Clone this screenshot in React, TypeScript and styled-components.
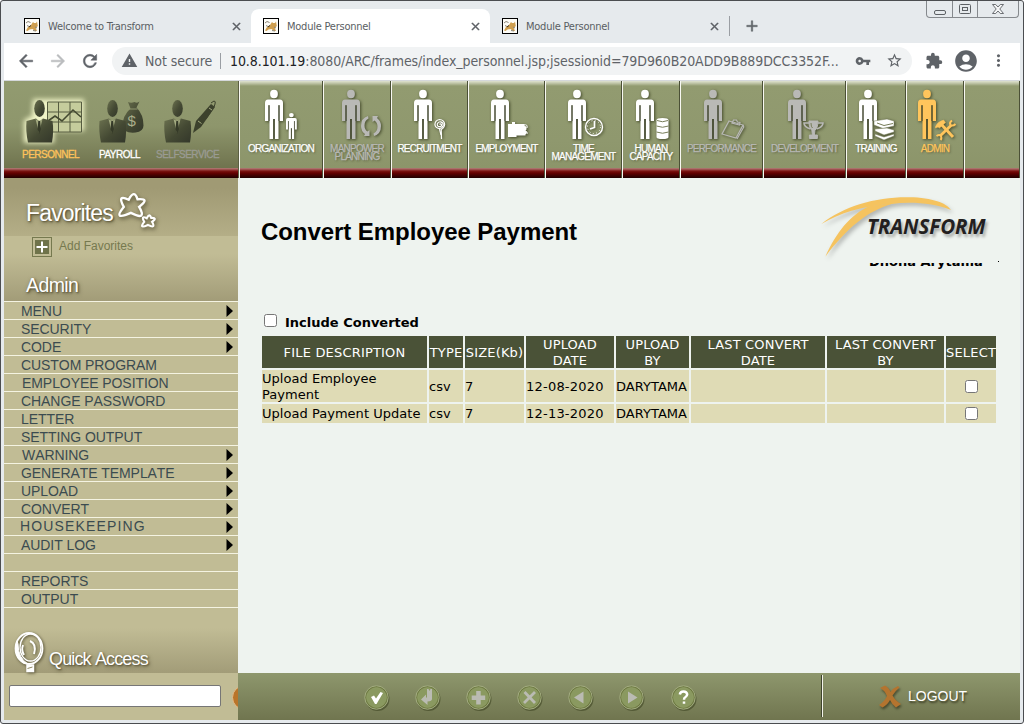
import React from "react";
import styled, { createGlobalStyle, css } from "styled-components";
import {
  MdArrowBack,
  MdArrowForward,
  MdRefresh,
  MdWarning,
  MdVpnKey,
  MdStarBorder,
  MdExtension,
  MdAccountCircle,
  MdMoreVert,
  MdClose,
  MdAdd,
} from "react-icons/md";

const ui = '"DejaVu Sans Condensed", "DejaVu Sans", sans-serif';
const sans = '"Liberation Sans", Arial, sans-serif';
const verdana = 'Verdana, "DejaVu Sans", sans-serif';

const GlobalStyle = createGlobalStyle`
  * { box-sizing: border-box; }
  body { margin: 0; overflow: hidden; font-kerning: none; }
`;

const Frame = styled.div`
  width: 1024px;
  height: 724px;
  display: flex;
  flex-direction: column;
  background: #e6eaed;
  border: 1px solid #4b4d50;
  border-radius: 3px;
`;

/* ---------- browser chrome ---------- */

const TabStrip = styled.div`
  height: 42px;
  display: flex;
  align-items: flex-end;
  padding-left: 11px;
  flex: none;
`;

const Tab = styled.div<{ $active?: boolean }>`
  width: 239px;
  height: 34px;
  display: flex;
  align-items: center;
  padding: 0 8px 0 12px;
  gap: 8px;
  font: 11px/16px ${ui};
  font-stretch: condensed;
  letter-spacing: -0.24px;
  color: #5a5e63;
  border-radius: 8px 8px 0 0;
  background: ${(p) => (p.$active ? "#fff" : "transparent")};
  svg:last-child path:last-child {
    stroke: currentColor;
    stroke-width: 0.9px;
  }
`;

const TabTitle = styled.span`
  flex: 1;
  padding-top: 1px;
`;

const StripSide = styled.div`
  height: 34px;
  display: flex;
  align-items: center;
  gap: 13px;
  flex: 1;
  color: #5f6368;
  path:last-child {
    stroke: currentColor;
    stroke-width: 0.6px;
  }
`;

const Rule = styled.i<{ $h: number }>`
  width: 1px;
  height: ${(p) => p.$h}px;
  background: #9a9ea3;
`;

const WindowButtons = styled.div`
  width: 93px;
  height: 17px;
  display: flex;
  align-self: flex-start;
  margin-right: 4px;
  border: 1px solid #85898d;
  border-top: 0;
  border-radius: 0 0 4px 4px;
`;

const WindowButton = styled.span<{ $w: number }>`
  width: ${(p) => p.$w}px;
  display: flex;
  align-items: center;
  justify-content: center;
  & + & {
    border-left: 1px solid #85898d;
  }
`;

const Toolbar = styled.div`
  height: 38px;
  margin: 0 3px;
  padding: 4px 10px 6px 12px;
  display: flex;
  align-items: center;
  background: #fff;
  border-bottom: 1px solid #d5d8db;
  color: #5f6368;
  flex: none;
`;

const NavButtons = styled.div`
  display: flex;
  width: 96px;
  gap: 12px;
  align-items: center;
  path:last-child {
    stroke: currentColor;
    stroke-width: 0.6px;
  }
`;

const Omnibox = styled.div`
  width: 800px;
  height: 28px;
  border-radius: 14px;
  background: #f1f3f4;
  display: flex;
  align-items: center;
  padding-left: 9px;
  font: 14px/20px ${ui};
  font-stretch: condensed;
  letter-spacing: -0.08px;
  white-space: nowrap;
`;

const Security = styled.span`
  width: 75px;
  margin-left: 7px;
`;

const Address = styled.span`
  width: 625px;
  margin-left: 9px;
  b {
    font-weight: normal;
    color: #202124;
  }
`;

const BoxIcons = styled.span`
  display: flex;
  gap: 15px;
  align-items: center;
`;

const ToolIcons = styled.div`
  display: flex;
  align-items: center;
  margin-left: 13px;
  gap: 10px;
`;

/* ---------- application header ---------- */

const redBar = "linear-gradient(#b08078 0, #984040 2px, #7c1512 3px, #650000 5px, #480000 7px, #200000 10px)";

const Header = styled.header`
  height: 97px;
  margin: 0 3px;
  display: flex;
  flex: none;
`;

const RoleBar = styled.div`
  width: 235px;
  display: flex;
  padding: 14px 0 0 16px;
  border-right: 1px solid #5b5f43;
  background: ${redBar} 0 100% / 100% 10px no-repeat, linear-gradient(#929b70 0, #8e966c 45px, #6f734e 87px);
`;

const Role = styled.div<{ $w: number; $color: string; $indent?: number }>`
  width: ${(p) => p.$w}px;
  display: flex;
  flex-direction: column;
  font: 10px/12px ${sans};
  letter-spacing: -0.5px;
  color: ${(p) => p.$color};
  -webkit-text-stroke: 0.3px currentColor;
  span {
    padding-left: ${(p) => p.$indent ?? 2}px;
  }
`;

const ModuleCell = styled.div<{ $w: number; $tone: string }>`
  width: ${(p) => p.$w}px;
  display: flex;
  flex-direction: column;
  padding-top: 6px;
  border-left: 1px solid #f8f8f2;
  border-right: 1px solid #4b5036;
  color: ${(p) => p.$tone};
  background: ${redBar} 0 100% / 100% 10px no-repeat,
    linear-gradient(#dfe2d0 0, #c3c8ac 2px, #929b70 5px, #8f986e 60px, #8c956a 87px);
`;

const ModuleIcon = styled.svg<{ $left: number }>`
  display: block;
  overflow: visible;
  margin-left: ${(p) => p.$left}px;
  filter: drop-shadow(1px 1px 1.5px rgba(40, 45, 20, 0.75));
`;

const ModuleLabel = styled.div`
  margin-top: 3px;
  text-align: center;
  font: 10px/8px ${sans};
  letter-spacing: -0.78px;
  white-space: pre;
  -webkit-text-stroke: 0.25px currentColor;
  text-shadow: 1px 1px 2px rgba(40, 45, 20, 0.5);
`;

/* ---------- sidebar ---------- */

const Workspace = styled.div`
  flex: 1;
  display: flex;
  margin: 0 3px 3px;
  min-height: 0;
`;

const Sidebar = styled.aside`
  width: 234px;
  background: #c1bc95;
  font-family: ${sans};
  display: flex;
  flex-direction: column;
`;

const glow = css`
  color: #fff;
  text-shadow: 1px 1px 2px rgba(60, 55, 30, 0.75), 1px 2px 4px rgba(60, 55, 30, 0.5);
`;

const FavoritesHead = styled.div`
  height: 58px;
  padding: 14px 0 0 22px;
  display: flex;
  background: linear-gradient(#a09a74, #a09a74 10px, #b4ae87);
  font-size: 23px;
  line-height: 42px;
  letter-spacing: -0.85px;
  ${glow}
  svg {
    margin-left: 4px;
    overflow: visible;
    filter: drop-shadow(1px 2px 2px rgba(60, 55, 30, 0.8));
  }
`;

const FavoritesBody = styled.div`
  height: 65px;
  background: linear-gradient(#c1bc95 0, #c1bc95 18px, #a29c78 65px);
`;

const AddFavorites = styled.div`
  display: flex;
  align-items: center;
  padding: 1px 0 0 28px;
  gap: 7px;
  height: 21px;
  font-size: 12px;
  color: #76794f;
  span {
    margin-top: -3px;
  }
`;

const SectionTitle = styled.div`
  padding: 16px 0 0 22px;
  font-size: 19.5px;
  line-height: 24px;
  letter-spacing: -0.6px;
  ${glow}
`;

const MenuList = styled.ul`
  margin: 0;
  padding: 0;
  list-style: none;
  border-bottom: 1px solid #f4f3e2;
`;

const MenuItem = styled.li<{ $wide?: boolean; $indent?: number }>`
  height: 18px;
  border-top: 1px solid #f4f3e2;
  display: flex;
  align-items: center;
  justify-content: space-between;
  padding: 1px 5px 0 ${(p) => p.$indent ?? 17}px;
  font-size: 14px;
  line-height: ${(p) => (p.$wide ? "15px" : "17px")};
  letter-spacing: ${(p) => (p.$wide ? "1.15px" : "-0.07px")};
  color: #3b4b50;
  span {
    padding-bottom: ${(p) => (p.$wide ? "2px" : "0")};
  }
`;

const QuickAccess = styled.div`
  margin-top: auto;
  height: 65px;
  display: flex;
  align-items: flex-end;
  padding: 0 0 2px 9px;
  gap: 4px;
  background: linear-gradient(#c1bc95 20px, #a29c78);
  font-size: 18px;
  line-height: 24px;
  letter-spacing: -0.85px;
  ${glow}
  svg {
    margin-bottom: -2.5px;
    filter: drop-shadow(1px 1px 1.5px rgba(60, 55, 30, 0.8));
  }
`;

const SearchRow = styled.div`
  height: 47px;
  display: flex;
  align-items: center;
  justify-content: space-between;
  padding: 0 0 1px 5px;
  overflow: hidden;
`;

const SearchInput = styled.input`
  width: 212px;
  height: 22px;
  border: 1px solid #767676;
  border-radius: 2px;
  background: #fff;
  padding: 0 2px;
`;

const GoButton = styled.span`
  width: 6px;
  height: 25px;
  margin-top: 2px;
  display: flex;
  overflow: hidden;
  svg {
    flex: none;
  }
`;

/* ---------- main panel ---------- */

const MainColumn = styled.div`
  flex: 1;
  display: flex;
  flex-direction: column;
`;

const Main = styled.main`
  flex: 1;
  background: #eef3ef;
  padding-left: 22px;
  color: #000;
  font: 13px/16px ${verdana};
`;

const TitleRow = styled.div`
  display: flex;
  justify-content: space-between;
  height: 130px;
`;

const Title = styled.h1`
  margin: 39px 0 0 1px;
  font: bold 24px/30px ${sans};
  letter-spacing: -0.06px;
`;

const Brand = styled.div`
  width: 204px;
  display: flex;
  flex-direction: column;
`;

const BrandMark = styled.div`
  height: 83px;
  display: grid;
  > * {
    grid-area: 1 / 1;
  }
  svg {
    margin-left: 2px;
    filter: drop-shadow(2px 3px 2px rgba(0, 0, 0, 0.25));
  }
`;

const BrandName = styled.span`
  margin: 34px 0 0 51px;
  font: italic bold 20.5px/28px "Open Sans", sans-serif;
  letter-spacing: -0.05px;
  color: #231f20;
  text-shadow: 2px 3px 3px rgba(0, 0, 0, 0.3);
`;

const Speck = styled.i`
  width: 1px;
  height: 1px;
  margin: 0 0 1px 182px;
  background: #000;
`;

const UserName = styled.div`
  height: 7px;
  padding-left: 53px;
  display: flex;
  align-items: flex-end;
  overflow: hidden;
  font-weight: bold;
  white-space: nowrap;
`;

const Check = styled.input.attrs({ type: "checkbox" })`
  width: 13px;
  height: 13px;
  margin: 0;
`;

const IncludeRow = styled.label`
  display: flex;
  align-items: flex-start;
  gap: 8px;
  height: 26px;
  padding: 6px 0 0 4px;
  font-weight: bold;
  span {
    padding-top: 1px;
  }
`;

const Table = styled.table`
  table-layout: fixed;
  width: 738px;
  border-collapse: separate;
  border-spacing: 2px;
`;

/* Sits slightly low in its line without making the cell taller. */
const CellText = styled.div`
  margin: 0.6px 0 -0.6px;
`;

const Th = styled.th`
  height: 32px;
  padding: 0;
  background: #4a5237;
  color: #fff;
  font-weight: normal;
  letter-spacing: 0.18px;
`;

const Td = styled.td<{ $center?: boolean; $spread?: boolean }>`
  height: 19px;
  padding: 0;
  background: #dfdbb5;
  letter-spacing: ${(p) => (p.$spread ? "0.22px" : "0.03px")};
  text-align: ${(p) => (p.$center ? "center" : "left")};
  ${Check} {
    display: block;
    margin: 0 auto;
  }
`;

/* ---------- footer ---------- */

const Footer = styled.footer`
  height: 47px;
  display: flex;
  align-items: center;
  padding-bottom: 1px;
  background: linear-gradient(#8e976d, #70754f);
`;

const Actions = styled.div`
  width: 583px;
  display: flex;
  gap: 26.1px;
  padding: 3px 0 0 126px;
  svg {
    flex: none;
    display: block;
    overflow: visible;
  }
`;

const Divider = styled.i`
  width: 2px;
  height: 42px;
  border-left: 1px solid #3f442c;
  background: #f4f4ec;
`;

const Logout = styled.div`
  display: flex;
  align-items: center;
  gap: 6px;
  margin-left: 55px;
  color: #fff;
  font: 14px/20px ${sans};
  text-shadow: 1px 2px 2px rgba(40, 40, 20, 0.8);
  svg {
    filter: drop-shadow(1px 2px 1px rgba(40, 40, 20, 0.6));
  }
`;

/* ---------- drawings ---------- */

const Favicon = () => (
  <svg width="16" height="16" viewBox="0 0 16 16">
    <rect x=".5" y=".5" width="15" height="15" fill="#fdfcf7" stroke="#000" />
    <path d="M2 12.500l2-3.500 3-2 2-3 1 1h2l1-1.500.8 4.500-2 2 1.200 3h-2l-2.500-2-3 .5-2 1.500z" fill="#cf9f50" />
    <path d="M2 5l2-1.500 2.500 1M3 7.500l2 1M9 12.500l3 .5M11 9l2 1" stroke="#8b8578" fill="none" />
    <path d="M5 9l2-1.500" stroke="#3a2d18" />
  </svg>
);

const Person = () => (
  <g>
    <ellipse cx="9" cy="4" rx="3.900" ry="4.200" fill="currentColor" />
    <path d="M3 9.500h12q3 0 3 3.500v18h-3.500V15h-1v34H9.800V29H8.200v20H4.500V15h-1v16H0V13q0-3.500 3-3.500z" fill="currentColor" />
    <path d="M4 15.500V31M14 15.500V31M9 29v20" stroke="#2e3220" strokeWidth=".8" />
  </g>
);

const extras: Record<string, React.ReactNode> = {
  child: (
    <g transform="translate(21 23) scale(.6 .53)">
      <Person />
    </g>
  ),
  cycle: (
    <g fill="currentColor">
      <path d="M26 26q-7 2-7 10 0 5 4 8l-1 2h5.500v-6l-2 1.500q-3-2-3-6 0-5 4-7z" />
      <path d="M32 46q7-2 7-10 0-5-4-8l1-2h-5.500v6l2-1.500q3 2 3 6 0 5-4 7z" />
    </g>
  ),
  spiral: (
    <g fill="none" stroke="currentColor" strokeWidth="1.200">
      <path d="M25.500 34.500q1.200-1.400 2 0 .3 2-2 2.200-2.600-.4-2.200-2.700.8-2.500 3.300-2.200 3 .8 2.600 3.600-.9 3-4 3.200-4-.8-4.300-4.100.2-4.200 4.600-5 4.600.2 5.200 4.800-.4 4-3.500 5.200l.3 9.500" />
      <path d="M25.500 39l1.500 6" />
    </g>
  ),
  case: (
    <g fill="currentColor">
      <path d="M17 34h4v-2h3v2h9.500v2l2 .5v3l-1 1 1.500 2-1.500 2v1h-9v1.500H17z" />
      <path d="M33 35q4-1 3 3M33 41q4 0 3 3" fill="none" stroke="currentColor" />
    </g>
  ),
  clock: (
    <g fill="none" stroke="currentColor">
      <circle cx="26" cy="37" r="8.500" strokeWidth="1.400" />
      <circle cx="26" cy="37" r="6.500" strokeDasharray="1 2.400" />
      <path d="M26.500 31v6.500L22 39" strokeWidth="1.700" />
    </g>
  ),
  barrel: (
    <g>
      <path d="M20.500 30v17q0 2 6 2t6-2V30q0-2-6-2t-6 2z" fill="currentColor" />
      <path d="M21 30.500q5.500 2.500 11 0M20.500 36q6 2.500 12 0M20.500 42q6 2.500 12 0" fill="none" stroke="#777d59" />
    </g>
  ),
  clipboard: (
    <g fill="none" stroke="currentColor" strokeWidth="1.200">
      <path d="M25 31l14 4-7 13-14-4z" />
      <path d="M39 35l.8 2L33 49M28 33l1.500-3h3l1 2 2.500.5-.5 2.500z" />
    </g>
  ),
  trophy: (
    <g fill="none" stroke="currentColor">
      <path d="M21 31h9q0 7-3 9l-.6 5h3v3.500h-8V45h3l-.6-5q-3-2-2.800-9z" fill="currentColor" />
      <path d="M21 33h-5q0 4 6.500 6M30 33h5q0 4-6.500 6" strokeWidth="1.600" />
      <path d="M23 33q0 4 1.500 5" stroke="#777d59" />
    </g>
  ),
  books: (
    <g stroke="#777d59" strokeWidth=".5" fill="currentColor">
      <path d="M15 31l13-2 7 2v5l-11 2.500L15 35z" />
      <path d="M16 39l12-1 7 2v2l-10 3-9-4z" />
      <path d="M16 44l9 3 10-3v2l-10 4-9-4z" />
      <path d="M18 33l7 2.500 9-2" fill="none" strokeWidth="1" />
    </g>
  ),
  tools: (
    <g fill="none" stroke="currentColor">
      <path d="M23 34l12 13" strokeWidth="3" />
      <path d="M17.500 36.500q2-5 8-6.500l2 2.500-6 5.500-1.500-1-2.500 1z" fill="currentColor" strokeWidth=".5" />
      <path d="M33.500 35L22 46" strokeWidth="2.800" />
      <path d="M34 30.500q-3 2-1.500 4.500 2.500 1.500 5-1M18.500 46q3-2 4.500 0 1 2.500-.5 4" strokeWidth="2" />
    </g>
  ),
};

const Businessman = () => (
  <g fill="url(#suit)">
    <ellipse cx="19.500" cy="13.500" rx="5.300" ry="8.500" />
    <path d="M6.500 26l9.500-2.500 3.500 3 3.500-3 9.500 2.500q1.500 10-.5 21.500H8Q5.500 36 6.500 26z" />
    <path d="M15.500 24l3.500 14 3.500-14-1.500 1.500h-3z" fill="#a3aa80" />
    <path d="M18.300 26h1.800l.8 8-1.700 5-1.700-5z" fill="#353a28" />
  </g>
);

const SuitGradient = () => (
  <defs>
    <linearGradient id="suit" x1="0" y1="0" x2="1" y2="1">
      <stop offset="0" stopColor="#6b714f" />
      <stop offset=".55" stopColor="#444933" />
      <stop offset="1" stopColor="#33372a" />
    </linearGradient>
    <filter id="halo" x="-30%" y="-30%" width="160%" height="160%">
      <feGaussianBlur stdDeviation="2.800" />
    </filter>
  </defs>
);

const HaloSvg = styled.svg`
  overflow: visible;
`;

const PersonnelIcon = () => (
  <HaloSvg width="66" height="54" viewBox="0 0 66 54">
    <SuitGradient />
    <path d="M13 4h51v32H34v12H4V25l8-4z" fill="#f0f4c6" filter="url(#halo)" />
    <rect x="28" y="7" width="33" height="30" fill="#c5cc9c" />
    <path d="M27.500 7h34v30h-34zM38.500 7v30M50 7v30M27.500 17h34M27.500 27h34" fill="none" stroke="#565c40" />
    <path d="M28 26l7-5 7 5 11-11 8 7" fill="none" stroke="#444a31" strokeWidth="1.600" />
    <Businessman />
  </HaloSvg>
);

const PayrollIcon = () => (
  <svg width="50" height="54" viewBox="0 0 50 54">
    <g transform="translate(-3 0)">
      <path d="M35 7q3 1.500 6.500 0 3 1.500 5-.5l-3 6q7 7 7 18 0 6-8 7-12 1-13-6 0-11 8-18z" fill="url(#suit)" />
      <path d="M35.500 14h9" stroke="#8f966e" />
      <text x="34.500" y="31" fontFamily="Liberation Sans" fontSize="15" fill="#a9ae8b">
        $
      </text>
      <Businessman />
    </g>
  </svg>
);

const SelfServiceIcon = () => (
  <svg width="66" height="54" viewBox="0 0 66 54">
    <g transform="translate(3 0)">
      <path d="M35 38l3-12L53 9l4 3-14 20z" fill="#3c412c" />
      <path d="M53 8l3-2q2 0 1 3l-1 3M54 15l-6 9" stroke="#3c412c" fill="none" />
      <path d="M40 26l3.500 2.500M51 13l3 2" stroke="#a3aa80" />
      <Businessman />
    </g>
  </svg>
);

const starPath = "M12 7.500Q17-2.500 20 7Q32 6 21.500 14Q29 27 14 19.500Q-3 27 7.500 14Q1 2 12 7.500z";

const Stars = () => (
  <svg width="42" height="40" viewBox="0 0 42 40" fill="none" stroke="#fff">
    <path d={starPath} strokeWidth="2.200" transform="translate(-1.500 -.5) scale(1.100)" />
    <path d={starPath} strokeWidth="3.800" transform="translate(23 22) scale(.56)" />
  </svg>
);

const Magnifier = () => (
  <svg width="32" height="42" viewBox="0 0 32 42" fill="none" stroke="#fff">
    <ellipse cx="16" cy="16.500" rx="13.500" ry="15.500" strokeWidth="1.800" />
    <ellipse cx="17.500" cy="15.500" rx="10.500" ry="13.500" strokeWidth="1.300" />
    <path d="M4 9q-4 9 2 18 4 5 9 5-10-6-10-20z" fill="#fff" />
    <path d="M17 9q7 3 4 13M10 13q-2 5 1 10" strokeWidth="2" />
    <path d="M14 33h6M14 33v6.500h6.500V33z" strokeWidth="1.500" fill="#fff" />
    <path d="M14.500 36.500l5-1.500" stroke="#8f8963" />
  </svg>
);

const glyphs = [
  <path key="ok" d="M7 12l3-1.500 2 3L16.500 7l2.500 1-6.500 11h-1.500z" fill="#fff" />,
  <path key="enter" d="M12 4h1.500l1 2 1-2H17v10q0 2-4.500 2.500V20L6 14.500l5-5v3h1z" fill="#babbb2" />,
  <path key="plus" d="M10.200 6h4.500v4.500h4.500V15h-4.500v4.500h-4.500V15H5.700v-4.500h4.500z" fill="#babbb2" />,
  <path key="cross" d="M7.500 7l10.500 11M18 7L7 18" stroke="#babbb2" strokeWidth="2.800" />,
  <path key="prev" d="M15.500 6.500v12l-9.500-6z" fill="#babbb2" />,
  <path key="next" d="M9 6.500v12l9.500-6z" fill="#babbb2" />,
  <path
    key="help"
    d="M8.800 9.500q.5-3 3.700-3t3.700 2.800q0 1.700-1.700 2.700-1.500.8-1.500 2.700M13 16.500v2.300"
    fill="none"
    stroke="#fff"
    strokeWidth="2.500"
  />,
];

const RoundButton = ({ children }: { children: React.ReactNode }) => (
  <svg width="25" height="25" viewBox="0 0 25 25">
    <circle cx="13.500" cy="14" r="12" fill="#3d4522" opacity=".6" />
    <circle cx="12.500" cy="12.500" r="11.700" fill="#6a763e" stroke="#a9b288" strokeWidth=".9" />
    <circle cx="12.500" cy="12.500" r="10" fill="#8a9960" stroke="#95a26b" strokeWidth=".6" />
    {children}
  </svg>
);

/* ---------- data ---------- */

const roleColors = { active: "#ffc35a", on: "#ffffff", off: "#9a9b93" };
const on = "#ffffff";
const off = "#b9b9b6";

const modules = [
  { w: 84, left: 24.5, label: "ORGANIZATION", icon: "child", tone: on },
  { w: 68, left: 17.5, label: "MANPOWER\nPLANNING", icon: "cycle", tone: off },
  { w: 77, left: 21.7, label: "RECRUITMENT", icon: "spiral", tone: on },
  { w: 77, left: 21.5, label: "EMPLOYMENT", icon: "case", tone: on },
  { w: 77, left: 21.5, label: "TIME\nMANAGEMENT", icon: "clock", tone: on },
  { w: 58, left: 12.5, label: "HUMAN\nCAPACITY", icon: "barrel", tone: on },
  { w: 83, left: 22.6, label: "PERFORMANCE", icon: "clipboard", tone: off },
  { w: 83, left: 23.5, label: "DEVELOPMENT", icon: "trophy", tone: off },
  { w: 60, left: 12, label: "TRAINING", icon: "books", tone: on },
  { w: 58, left: 11.3, label: "ADMIN", icon: "tools", tone: "#ffc55c" },
];

const menu: { label: string; sub?: boolean; wide?: boolean; indent?: number }[] = [
  { label: "MENU", sub: true },
  { label: "SECURITY", sub: true },
  { label: "CODE", sub: true },
  { label: "CUSTOM PROGRAM" },
  { label: "EMPLOYEE POSITION", indent: 18 },
  { label: "CHANGE PASSWORD" },
  { label: "LETTER" },
  { label: "SETTING OUTPUT" },
  { label: "WARNING", sub: true, indent: 18 },
  { label: "GENERATE TEMPLATE", sub: true },
  { label: "UPLOAD", sub: true },
  { label: "CONVERT", sub: true },
  { label: "HOUSEKEEPING", sub: true, wide: true, indent: 16 },
  { label: "AUDIT LOG", sub: true },
  { label: "" },
  { label: "REPORTS" },
  { label: "OUTPUT" },
];

const columns = [
  { w: 165, label: "FILE DESCRIPTION" },
  { w: 34, label: "TYPE" },
  { w: 59, label: "SIZE(Kb)" },
  { w: 88, label: "UPLOAD DATE" },
  { w: 73, label: "UPLOAD BY" },
  { w: 134, label: "LAST CONVERT DATE" },
  { w: 117, label: "LAST CONVERT BY" },
  { w: 50, label: "SELECT" },
];

const files = [
  ["Upload Employee Payment", "csv", "7", "12-08-2020", "DARYTAMA", "", ""],
  ["Upload Payment Update", "csv", "7", "12-13-2020", "DARYTAMA", "", ""],
];

const tabs = ["Welcome to Transform", "Module Personnel", "Module Personnel"];

export default function App() {
  return (
    <Frame>
      <GlobalStyle />
      <TabStrip>
        {tabs.map((title, i) => (
          <Tab key={i} $active={i === 1}>
            <Favicon />
            <TabTitle>{title}</TabTitle>
            <MdClose size={13} />
          </Tab>
        ))}
        <StripSide>
          <Rule $h={20} />
          <MdAdd size={18} />
        </StripSide>
        <WindowButtons>
          <WindowButton $w={25}>
            <svg width="12" height="14" fill="none" stroke="#5d6165">
              <rect x=".5" y="8.500" width="11" height="4" rx="1.500" />
            </svg>
          </WindowButton>
          <WindowButton $w={25}>
            <svg width="13" height="12" fill="none" stroke="#5d6165">
              <rect x=".5" y="1.500" width="11" height="9" rx="1" />
              <rect x="3.500" y="4.500" width="5" height="3" />
            </svg>
          </WindowButton>
          <WindowButton $w={41}>
            <svg width="12" height="12" fill="#f4f5f6" stroke="#5d6165" strokeWidth=".9">
              <path d="M.5 1.500h3.200L6 4l2.300-2.500h3.200L7.800 6l3.700 4.500H8.300L6 8l-2.300 2.500H.5L4.200 6z" />
            </svg>
          </WindowButton>
        </WindowButtons>
      </TabStrip>

      <Toolbar>
        <NavButtons>
          <MdArrowBack size={20} />
          <MdArrowForward size={20} color="#babcbe" />
          <MdRefresh size={20} />
        </NavButtons>
        <Omnibox>
          <MdWarning size={17} />
          <Security>Not secure</Security>
          <Rule $h={16} />
          <Address>
            <b>10.8.101.19</b>:8080/ARC/frames/index_personnel.jsp;jsessionid=79D960B20ADD9B889DCC3352F...
          </Address>
          <BoxIcons>
            <MdVpnKey size={16} />
            <MdStarBorder size={17} />
          </BoxIcons>
        </Omnibox>
        <ToolIcons>
          <MdExtension size={18} />
          <MdAccountCircle size={26} />
          <MdMoreVert size={19} />
        </ToolIcons>
      </Toolbar>

      <Header>
        <RoleBar>
          <Role $w={76} $color={roleColors.active}>
            <PersonnelIcon />
            <span>PERSONNEL</span>
          </Role>
          <Role $w={59} $color={roleColors.on} $indent={3}>
            <PayrollIcon />
            <span>PAYROLL</span>
          </Role>
          <Role $w={70} $color={roleColors.off} $indent={1}>
            <SelfServiceIcon />
            <span>SELFSERVICE</span>
          </Role>
        </RoleBar>
        {modules.map((m) => (
          <ModuleCell key={m.label} $w={m.w} $tone={m.tone}>
            <ModuleIcon $left={m.left} width="40" height="55" viewBox="0 -3 40 55">
              <Person />
              {extras[m.icon]}
            </ModuleIcon>
            <ModuleLabel>{m.label}</ModuleLabel>
          </ModuleCell>
        ))}
        <ModuleCell $w={56} $tone={on} />
      </Header>

      <Workspace>
        <Sidebar>
          <FavoritesHead>
            Favorites
            <Stars />
          </FavoritesHead>
          <FavoritesBody>
            <AddFavorites>
              <svg width="20" height="20" viewBox="0 0 20 20">
                <rect x=".5" y=".5" width="19" height="19" fill="none" stroke="#76794f" />
                <rect x="3" y="3" width="14" height="14" fill="#6f734a" />
                <path d="M10 4.500v11M4.500 10h11" stroke="#fff" strokeWidth="2" />
              </svg>
              <span>Add Favorites</span>
            </AddFavorites>
            <SectionTitle>Admin</SectionTitle>
          </FavoritesBody>
          <MenuList>
            {menu.map((item, i) => (
              <MenuItem key={i} $wide={item.wide} $indent={item.indent}>
                <span>{item.label}</span>
                {item.sub && (
                  <svg width="7" height="12" viewBox="0 0 7 12">
                    <path d="M.5 0v12l6.500-6z" />
                  </svg>
                )}
              </MenuItem>
            ))}
          </MenuList>
          <QuickAccess>
            <Magnifier />
            Quick Access
          </QuickAccess>
          <SearchRow>
            <SearchInput />
            <GoButton>
              <svg width="25" height="25">
                <circle cx="12.500" cy="12.500" r="12" fill="#b9752a" stroke="#e2bd8c" />
              </svg>
            </GoButton>
          </SearchRow>
        </Sidebar>

        <MainColumn>
          <Main>
            <TitleRow>
              <Title>Convert Employee Payment</Title>
              <Brand>
                <BrandMark>
                  <svg width="190" height="82" viewBox="-48 0 570 246">
                    <g fill="#f5c35f">
                      <path d="M-38 138C30 84 130 56 226 58c70 1 112 18 125 38-50-20-120-26-178-18C80 84 16 106-38 138z" />
                      <path d="M-26 236C6 164 50 108 108 84l72-8C100 98 40 150-26 236z" />
                    </g>
                  </svg>
                  <BrandName>TRANSFORM</BrandName>
                </BrandMark>
                <Speck />
                <UserName>Dhona Arytama</UserName>
              </Brand>
            </TitleRow>
            <IncludeRow>
              <Check />
              <span>Include Converted</span>
            </IncludeRow>
            <Table>
              <colgroup>
                {columns.map((c) => (
                  <col key={c.label} width={c.w} />
                ))}
              </colgroup>
              <thead>
                <tr>
                  {columns.map((c) => (
                    <Th key={c.label}>
                      <CellText>{c.label}</CellText>
                    </Th>
                  ))}
                </tr>
              </thead>
              <tbody>
                {files.map((row) => (
                  <tr key={row[0]}>
                    {row.map((cell, i) => (
                      <Td key={i} $spread={i === 3}>
                        <CellText>{cell}</CellText>
                      </Td>
                    ))}
                    <Td $center>
                      <Check />
                    </Td>
                  </tr>
                ))}
              </tbody>
            </Table>
          </Main>
          <Footer>
            <Actions>
              {glyphs.map((g, i) => (
                <RoundButton key={i}>{g}</RoundButton>
              ))}
            </Actions>
            <Divider />
            <Logout>
              <svg width="24" height="23" viewBox="0 0 24 23" fill="#b4742f">
                <path d="M2 3l5-2.500q4 2 5.500 6.500Q15 3 20 1l1.500 1.500Q17 6 14.500 10.500q3 5.500 8.500 8.500l-5 3.500q-4-3-6-7.500-2.500 5-7.500 7.500L1 20q5.500-3.500 8-9Q7 5.500 2 3z" />
              </svg>
              LOGOUT
            </Logout>
          </Footer>
        </MainColumn>
      </Workspace>
    </Frame>
  );
}
